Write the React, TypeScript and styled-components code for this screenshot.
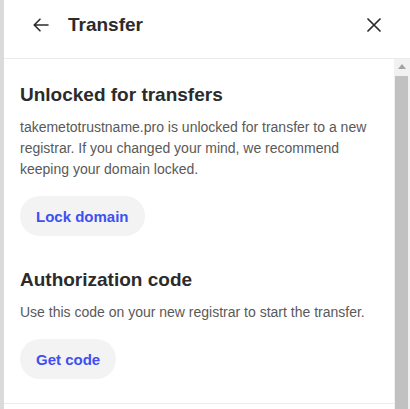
import React from 'react';
import styled, { createGlobalStyle } from 'styled-components';

const GlobalStyle = createGlobalStyle`
    html, body {
        margin: 0;
        padding: 0;
        height: 100%;
        overflow: hidden;
        background: #ffffff;
        font-family: "Liberation Sans", Arial, sans-serif;
    }
`

const sections = [
    {
        title: 'Unlocked for transfers',
        text: 'takemetotrustname.pro is unlocked for transfer to a new registrar. If you changed your mind, we recommend keeping your domain locked.',
        action: 'Lock domain',
    },
    {
        title: 'Authorization code',
        text: 'Use this code on your new registrar to start the transfer.',
        action: 'Get code',
    },
];

function App() {
    return (
        <Page>
            <GlobalStyle />
            <Backdrop />
            <Drawer>
                <Header>
                    <IconButton aria-label="Back">
                        <svg width="16" height="14" viewBox="0 0 16 14" fill="none" stroke="#2b2b2b" strokeWidth="1.6" strokeLinecap="round" strokeLinejoin="round">
                            <path d="M15 7H1.2M7 1.2L1.2 7L7 12.8" />
                        </svg>
                    </IconButton>
                    <Title>Transfer</Title>
                    <CloseButton aria-label="Close">
                        <svg width="14" height="14" viewBox="0 0 14 14" fill="none" stroke="#2b2b2b" strokeWidth="1.7" strokeLinecap="round">
                            <path d="M1 1L13 13M13 1L1 13" />
                        </svg>
                    </CloseButton>
                </Header>
                <Body>
                    <Scroller>
                        {sections.map(s => (
                            <Section key={s.title}>
                                <Heading>{s.title}</Heading>
                                <Text>{s.text}</Text>
                                <PillButton>{s.action}</PillButton>
                            </Section>
                        ))}
                    </Scroller>
                    <ScrollTrack>
                        <ScrollArrow>
                            <svg width="8" height="5" viewBox="0 0 8 5">
                                <path d="M4 0L8 5H0Z" fill="#a3a3a3" />
                            </svg>
                        </ScrollArrow>
                        <ScrollThumb />
                    </ScrollTrack>
                </Body>
            </Drawer>
        </Page>
    )
}

export default App;

const Page = styled.div`
    display: grid;
    grid-template-columns: 4px 1fr;
    height: 100vh;
`
const Backdrop = styled.div`
    background: #dadadc;
`
const Drawer = styled.div`
    display: flex;
    flex-direction: column;
    background: #fff;
    min-width: 0;
    min-height: 0;
`
const Header = styled.div`
    display: flex;
    align-items: center;
    box-sizing: border-box;
    height: 59px;
    padding: 0 29px 9px 29px;
    border-bottom: 1px solid #ebebeb;
    flex-shrink: 0;
`
const IconButton = styled.button`
    display: flex;
    align-items: center;
    justify-content: center;
    border: none;
    background: none;
    padding: 0;
    margin-right: 19px;
    cursor: pointer;
`
const CloseButton = styled(IconButton)`
    margin: 0 0 0 auto;
`
const Title = styled.h1`
    margin: 0;
    font-size: 19px;
    line-height: 25px;
    font-weight: 700;
    color: #2b2b2b;
`
const Body = styled.div`
    flex: 1;
    min-height: 0;
    display: flex;
`
const Scroller = styled.div`
    flex: 1;
    min-width: 0;
    overflow: hidden;
`
const ScrollTrack = styled.div`
    width: 16px;
    flex-shrink: 0;
    display: flex;
    flex-direction: column;
    background: #f1f1f1;
`
const ScrollArrow = styled.div`
    height: 15px;
    flex-shrink: 0;
    display: flex;
    align-items: center;
    justify-content: center;
    padding-right: 1px;
    svg {
        display: block;
    }
`
const ScrollThumb = styled.div`
    flex: 1;
    margin: 2px 2px 0 1px;
    background: #c1c1c1;
`
const Section = styled.div`
    padding: 24px 20px 0 16px;
    &:last-child {
        padding-bottom: 24px;
        border-bottom: 1px solid #ebebeb;
    }
    & + & {
        padding-top: 32px;
    }
`
const Heading = styled.h2`
    margin: 0;
    font-size: 19px;
    line-height: 24px;
    font-weight: 700;
    color: #2b2b2b;
`
const Text = styled.p`
    margin: 10px 0 0;
    font-size: 14px;
    line-height: 21px;
    color: #595959;
`
const PillButton = styled.button`
    margin-top: 16px;
    height: 40px;
    padding: 0 16px;
    border: none;
    border-radius: 20px;
    background: #f3f3f3;
    color: #3d50f2;
    font-family: inherit;
    font-size: 15px;
    font-weight: 700;
    cursor: pointer;
`
